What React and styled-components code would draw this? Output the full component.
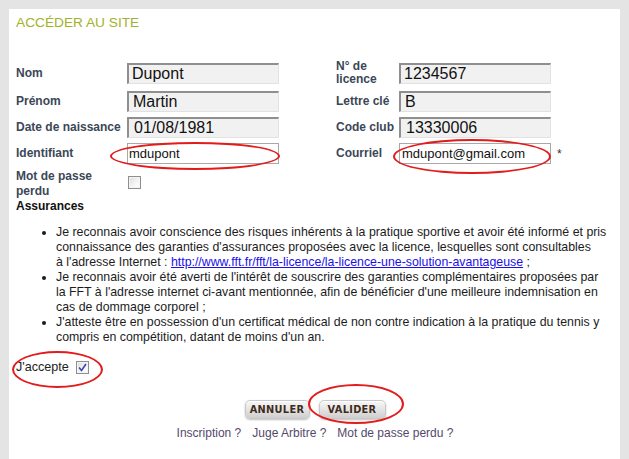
import React from "react";
import styled, { createGlobalStyle } from "styled-components";

const Global = createGlobalStyle`
  html, body { margin: 0; padding: 0; background: #e4e4e4; }
  body { font-family: "Liberation Sans", Arial, sans-serif; }
  * { box-sizing: border-box; }
`;

const Page = styled.div`
  padding: 9px 0 0 9px;
  height: 459px;
  overflow: hidden;
`;

const Panel = styled.div`
  width: 611px;
  min-height: 450px;
  background: #ffffff;
  padding: 6px 6px 0 7px;
  overflow: hidden;
`;

const Title = styled.h1`
  margin: 0;
  font-size: 13.7px;
  line-height: 16px;
  font-weight: normal;
  color: #a2b22a;
  text-transform: uppercase;
`;

const FormGrid = styled.div`
  margin-top: 29px;
  display: grid;
  grid-template-columns: 111px 152px 57px 63px 152px auto;
  grid-auto-rows: auto;
  row-gap: 5px;
  align-items: center;
`;

const Label = styled.div`
  font-size: 12px;
  line-height: 13px;
  font-weight: bold;
  color: #3b4757;
  padding-right: 4px;
`;

const FieldWrap = styled.div`
  position: relative;
  height: 21px;
`;

const Input = styled.div`
  height: 21px;
  width: 152px;
  font-size: ${(p) => (p.$plain ? "13px" : "16px")};
  line-height: ${(p) => (p.$plain ? "19px" : "18px")};
  color: #111;
  white-space: nowrap;
  overflow: hidden;
  background: ${(p) => (p.$plain ? "#ffffff" : "#f1f1f1")};
  border: ${(p) => (p.$plain ? "1px solid #a9a9a9" : "1px solid #e2e2e2")};
  border-top: ${(p) => (p.$plain ? "1px solid #a9a9a9" : "2px solid #8f8f8f")};
  border-left: ${(p) => (p.$plain ? "1px solid #a9a9a9" : "2px solid #8f8f8f")};
  padding-left: ${(p) => p.$pad || 3}px;
`;

const Ellipse = styled.div`
  position: absolute;
  left: ${(p) => p.$l}px;
  top: ${(p) => p.$t}px;
  width: ${(p) => p.$w}px;
  height: ${(p) => p.$h}px;
  border: 2px solid #e31b1b;
  border-radius: 50%;
  pointer-events: none;
`;

const Star = styled.span`
  font-size: 12px;
  color: #333;
  padding-left: 6px;
`;

const MotLabel = styled.div`
  font-size: 12px;
  line-height: 15px;
  font-weight: bold;
  color: #3b4757;
  padding-right: 8px;
`;

const Box = styled.span`
  display: inline-flex;
  align-items: center;
  justify-content: center;
  width: 13px;
  height: 13px;
  border: 1px solid #8e8e8e;
  background: linear-gradient(135deg, #dcdcdc 0%, #f6f6f6 60%, #ffffff 100%);
  box-shadow: inset 0 0 0 1px #f4f4f4;
  align-self: start;
  margin-top: ${(p) => p.$mt || 0}px;
  margin-left: ${(p) => p.$ml || 0}px;
`;

const Section = styled.div`
  font-size: 12px;
  line-height: 15px;
  font-weight: bold;
  color: #111;
`;

const List = styled.ul`
  margin: 11px 0 0 0;
  padding-left: 40px;
  font-size: 12.35px;
  line-height: 15px;
  color: #1c1c1c;
  white-space: nowrap;
`;

const Link = styled.a`
  color: #1a10e8;
  text-decoration: underline;
`;

const AcceptRow = styled.div`
  position: relative;
  display: flex;
  align-items: center;
  margin-top: 15px;
  font-size: 12.6px;
  line-height: 15px;
  color: #222;
  width: max-content;
`;

const Buttons = styled.div`
  display: flex;
  justify-content: center;
  gap: 9px;
  margin-top: 24px;
`;

const BtnWrap = styled.div`
  position: relative;
`;

const Button = styled.button`
  height: 19px;
  width: ${(p) => p.$w}px;
  padding: 0;
  border: 1px solid #c8c8c8;
  border-radius: 5px;
  background: linear-gradient(#f7f7f7 0%, #e2e2e2 55%, #cfcfcf 100%);
  box-shadow: 0 1px 2px rgba(0, 0, 0, 0.25), inset 0 1px 0 #ffffff;
  font-family: "DejaVu Sans", Verdana, sans-serif;
  font-weight: bold;
  font-size: 9.8px;
  letter-spacing: 0.3px;
  color: #3f2b1b;
  line-height: 17px;
`;

const Links = styled.div`
  display: flex;
  justify-content: center;
  gap: 11px;
  margin-top: 7px;
  font-size: 12px;
  line-height: 14px;
  color: #54496c;
`;

const Check = () => (
  <svg width="9" height="9" viewBox="0 0 9 9">
    <path d="M1 4.5 L3.5 7.5 L8 1" fill="none" stroke="#3a45b8" strokeWidth="1.6" />
  </svg>
);

export default function App() {
  return (
    <Page>
      <Global />
      <Panel>
        <Title>Accéder au site</Title>
        <FormGrid>
          <Label>Nom</Label>
          <FieldWrap>
            <Input>Dupont</Input>
          </FieldWrap>
          <span />
          <Label>N° de licence</Label>
          <FieldWrap>
            <Input>1234567</Input>
          </FieldWrap>
          <span />

          <Label>Prénom</Label>
          <FieldWrap>
            <Input $pad={4}>Martin</Input>
          </FieldWrap>
          <span />
          <Label>Lettre clé</Label>
          <FieldWrap>
            <Input $pad={4}>B</Input>
          </FieldWrap>
          <span />

          <Label>Date de naissance</Label>
          <FieldWrap>
            <Input $pad={5}>01/08/1981</Input>
          </FieldWrap>
          <span />
          <Label>Code club</Label>
          <FieldWrap>
            <Input $pad={5}>13330006</Input>
          </FieldWrap>
          <span />

          <Label>Identifiant</Label>
          <FieldWrap>
            <Input $plain $pad={1}>mdupont</Input>
            <Ellipse $l={-17} $t={-1} $w={170} $h={28} />
          </FieldWrap>
          <span />
          <Label>Courriel</Label>
          <FieldWrap>
            <Input $plain $pad={2}>mdupont@gmail.com</Input>
            <Ellipse $l={-6} $t={-4} $w={158} $h={35} />
          </FieldWrap>
          <Star>*</Star>

          <MotLabel>Mot de passe perdu</MotLabel>
          <Box $mt={7} $ml={1} />
        </FormGrid>
        <Section>Assurances</Section>
        <List>
          <li>
            Je reconnais avoir conscience des risques inhérents à la pratique sportive et avoir été informé et pris
            <br />
            connaissance des garanties d'assurances proposées avec la licence, lesquelles sont consultables
            <br />
            à l'adresse Internet :{" "}
            <Link href="#">http://www.fft.fr/fft/la-licence/la-licence-une-solution-avantageuse</Link> ;
          </li>
          <li>
            Je reconnais avoir été averti de l'intérêt de souscrire des garanties complémentaires proposées par
            <br />
            la FFT à l'adresse internet ci-avant mentionnée, afin de bénéficier d'une meilleure indemnisation en
            <br />
            cas de dommage corporel ;
          </li>
          <li>
            J'atteste être en possession d'un certificat médical de non contre indication à la pratique du tennis y
            <br />
            compris en compétition, datant de moins d'un an.
          </li>
        </List>
        <AcceptRow>
          J'accepte
          <Box $ml={7} $mt={1}>
            <Check />
          </Box>
          <Ellipse $l={-4} $t={-9} $w={91} $h={37} />
        </AcceptRow>
        <Buttons>
          <BtnWrap>
            <Button $w={65}>ANNULER</Button>
          </BtnWrap>
          <BtnWrap>
            <Button $w={67}>VALIDER</Button>
            <Ellipse $l={-11} $t={-15} $w={96} $h={40} />
          </BtnWrap>
        </Buttons>
        <Links>
          <span>Inscription ?</span>
          <span>Juge Arbitre ?</span>
          <span>Mot de passe perdu ?</span>
        </Links>
      </Panel>
    </Page>
  );
}
